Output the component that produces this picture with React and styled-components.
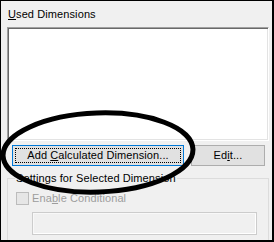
import React from 'react'
import styled, { createGlobalStyle } from 'styled-components'

const GlobalStyle = createGlobalStyle`
    html, body {
        margin: 0;
        padding: 0;
        background: #ffffff;
    }
    body {
        font-family: "Liberation Sans", Arial, sans-serif;
        font-size: 11px;
        letter-spacing: 0.1px;
    }
`

const Frame = styled.div`
    position: relative;
    box-sizing: border-box;
    width: 274px;
    height: 242px;
    overflow: hidden;
    background: #f0f0f0;
    border: 1px solid #000;
    border-right-width: 2px;
    border-bottom-width: 2px;
    padding: 7px 3px 0 6px;
    display: flex;
    flex-direction: column;
`

const Label = styled.div`
    line-height: 13px;
    color: #000;
    padding-left: 1px;
    margin-bottom: 6px;
`

const Key = styled.span`
    text-decoration: underline;
    text-underline-offset: 1px;
`

const ListBox = styled.div`
    box-sizing: border-box;
    height: 114px;
    background: #fff;
    border-style: solid;
    border-width: 1px;
    border-color: #a0a0a0 #ffffff #ffffff #a0a0a0;
    box-shadow: inset 1px 1px 0 #696969, inset -1px -1px 0 #e3e3e3;
`

const ButtonRow = styled.div`
    display: flex;
    gap: 7px;
    margin: 4px 0 0 5px;
`

const Button = styled.button`
    position: relative;
    box-sizing: border-box;
    width: ${p => p.$width}px;
    height: 21px;
    margin: 0;
    padding: 0;
    font: inherit;
    letter-spacing: inherit;
    line-height: 13px;
    color: #000;
    background: #e1e1e1;
    border: 1px solid ${p => (p.$focused ? '#0078d7' : '#adadad')};
    outline: ${p => (p.$focused ? '1px dotted #000' : 'none')};
    outline-offset: -4px;
`

const Group = styled.fieldset`
    box-sizing: border-box;
    margin: 6px 0 0 0;
    padding: 0 7px;
    border: 1px solid #dcdcdc;
    border-bottom: none;
    flex: 1;
    min-height: 0;
`

const Legend = styled.legend`
    padding: 0 1px;
    line-height: 13px;
    color: #000;
`

const CheckRow = styled.div`
    display: flex;
    align-items: center;
    gap: 3px;
    margin: 7px 0 0 1px;
    color: #9d9d9d;
    line-height: 13px;
`

const CheckBox = styled.span`
    box-sizing: border-box;
    width: 13px;
    height: 13px;
    border: 1px solid #bcbcbc;
    background: #e6e6e6;
`

const TextField = styled.div`
    box-sizing: border-box;
    width: 225px;
    height: 23px;
    margin: 7px 0 0 17px;
    background: #f0f0f0;
    border: 1px solid #cccccc;
    box-shadow: inset 1px 1px 0 #f8f8f8, inset -1px -1px 0 #ffffff;
`

const Annotation = styled.svg`
    position: absolute;
    left: -1px;
    top: -1px;
    pointer-events: none;
`

export default function App() {
    return (
        <>
            <GlobalStyle />
            <Frame>
                <Label><Key>U</Key>sed Dimensions</Label>
                <ListBox />
                <ButtonRow>
                    <Button $width={172} $focused>Add <Key>C</Key>alculated Dimension...</Button>
                    <Button $width={74}>Ed<Key>i</Key>t...</Button>
                </ButtonRow>
                <Group>
                    <Legend>Settings for Selected Dimension</Legend>
                    <CheckRow>
                        <CheckBox />
                        <span>Ena<Key>b</Key>le Conditional</span>
                    </CheckRow>
                    <TextField />
                </Group>
                {/* hand-drawn callout circle over the buttons */}
                <Annotation width="274" height="242" viewBox="0 0 274 242">
                    <ellipse cx="98" cy="152.5" rx="95" ry="39.5" fill="none" stroke="#000" strokeWidth="5" transform="rotate(-2 98 152.5)" />
                </Annotation>
            </Frame>
        </>
    )
}
